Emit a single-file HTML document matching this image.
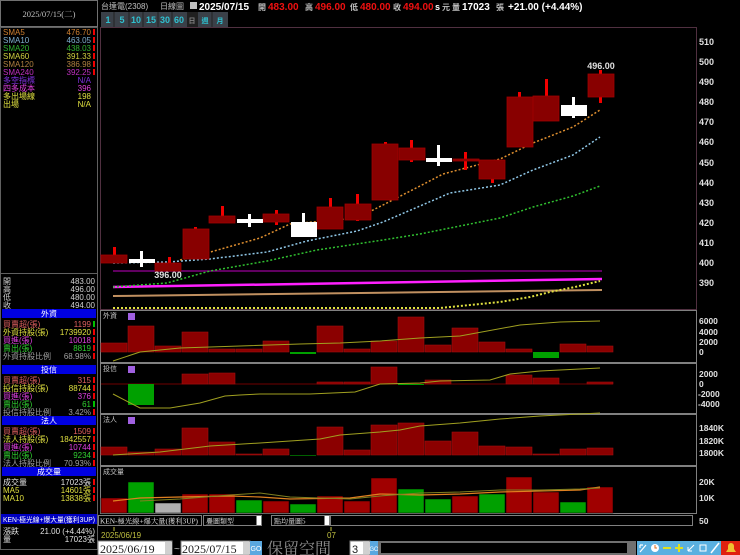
<!DOCTYPE html>
<html><head><meta charset="utf-8"><style>
html,body{margin:0;padding:0;background:#000;width:740px;height:555px;overflow:hidden}
svg{display:block}
text{font-family:"Liberation Sans","Noto Sans CJK TC",sans-serif}
.s{font-family:"Liberation Serif","Noto Serif CJK SC",serif;font-size:8px}
.ax{font-size:9px;font-weight:bold;fill:#e0e0e0}
</style></head><body>
<svg width="740" height="555" viewBox="0 0 740 555" xmlns="http://www.w3.org/2000/svg">
<rect width="740" height="555" fill="#000"/>
<!-- left panel -->
<rect x="0.5" y="0.5" width="97" height="26" fill="#000" stroke="#707070"/>
<text class="s" x="49" y="17" fill="#c0c0c0" text-anchor="middle" style="font-size:8.5px">2025/07/15(二)</text>
<rect x="0.5" y="27.5" width="97" height="522" fill="none" stroke="#606060"/>
<g class="s">
<text x="3" y="35" fill="#d08030">SMA5</text><text x="91" y="35" fill="#d08030" text-anchor="end">476.70</text>
<text x="3" y="43" fill="#80b0d0">SMA10</text><text x="91" y="43" fill="#80b0d0" text-anchor="end">463.05</text>
<text x="3" y="51" fill="#30b030">SMA20</text><text x="91" y="51" fill="#30b030" text-anchor="end">438.03</text>
<text x="3" y="59" fill="#d0d040">SMA60</text><text x="91" y="59" fill="#d0d040" text-anchor="end">391.33</text>
<text x="3" y="67" fill="#b08040">SMA120</text><text x="91" y="67" fill="#b08040" text-anchor="end">386.98</text>
<text x="3" y="75" fill="#c030c0">SMA240</text><text x="91" y="75" fill="#c030c0" text-anchor="end">392.25</text>
<text x="3" y="83" fill="#8030e0">多空指標</text><text x="91" y="83" fill="#8030e0" text-anchor="end">N/A</text>
<text x="3" y="91" fill="#e040e0">四多成本</text><text x="91" y="91" fill="#e040e0" text-anchor="end">396</text>
<text x="3" y="99" fill="#e0e040">多出場線</text><text x="91" y="99" fill="#e0e040" text-anchor="end">198</text>
<text x="3" y="107" fill="#e0e040">出場</text><text x="91" y="107" fill="#e0e040" text-anchor="end">N/A</text>
</g>
<g fill="#f00000"><rect x="93" y="29" width="2" height="6"/><rect x="93" y="37" width="2" height="6"/><rect x="93" y="45" width="2" height="6"/><rect x="93" y="53" width="2" height="6"/><rect x="93" y="61" width="2" height="6"/><rect x="93" y="69" width="2" height="6"/></g>
<line x1="0" y1="273.5" x2="98" y2="273.5" stroke="#606060"/>
<g class="s" fill="#d0d0d0">
<text x="3" y="284">開</text><text x="95" y="284" text-anchor="end">483.00</text>
<text x="3" y="292">高</text><text x="95" y="292" text-anchor="end">496.00</text>
<text x="3" y="300">低</text><text x="95" y="300" text-anchor="end">480.00</text>
<text x="3" y="308">收</text><text x="95" y="308" text-anchor="end">494.00</text>
</g>
<g class="s">
<rect x="2" y="309" width="94" height="9" fill="#0000e0"/><text x="49" y="316.5" fill="#fff" text-anchor="middle">外資</text>
<text x="3" y="327" fill="#e06060">買賣超(張)</text><text x="91" y="327" fill="#e06060" text-anchor="end">1199</text>
<text x="3" y="335" fill="#e0e040">外資持股(張)</text><text x="91" y="335" fill="#e0e040" text-anchor="end">1739920</text>
<text x="3" y="343" fill="#e040e0">買進(張)</text><text x="91" y="343" fill="#e040e0" text-anchor="end">10018</text>
<text x="3" y="351" fill="#30d030">賣出(張)</text><text x="91" y="351" fill="#30d030" text-anchor="end">8819</text>
<text x="3" y="359" fill="#a0a0a0">外資持股比例</text><text x="91" y="359" fill="#a0a0a0" text-anchor="end">68.98%</text>
<rect x="2" y="365" width="94" height="9" fill="#0000e0"/><text x="49" y="372.5" fill="#fff" text-anchor="middle">投信</text>
<text x="3" y="383" fill="#e06060">買賣超(張)</text><text x="91" y="383" fill="#e06060" text-anchor="end">315</text>
<text x="3" y="391" fill="#e0e040">投信持股(張)</text><text x="91" y="391" fill="#e0e040" text-anchor="end">88744</text>
<text x="3" y="399" fill="#e040e0">買進(張)</text><text x="91" y="399" fill="#e040e0" text-anchor="end">376</text>
<text x="3" y="407" fill="#30d030">賣出(張)</text><text x="91" y="407" fill="#30d030" text-anchor="end">61</text>
<text x="3" y="415" fill="#a0a0a0">投信持股比例</text><text x="91" y="415" fill="#a0a0a0" text-anchor="end">3.42%</text>
<rect x="2" y="416" width="94" height="9" fill="#0000e0"/><text x="49" y="423.5" fill="#fff" text-anchor="middle">法人</text>
<text x="3" y="434" fill="#e06060">買賣超(張)</text><text x="91" y="434" fill="#e06060" text-anchor="end">1509</text>
<text x="3" y="442" fill="#e0e040">法人持股(張)</text><text x="91" y="442" fill="#e0e040" text-anchor="end">1842557</text>
<text x="3" y="450" fill="#e040e0">買進(張)</text><text x="91" y="450" fill="#e040e0" text-anchor="end">10744</text>
<text x="3" y="458" fill="#30d030">賣出(張)</text><text x="91" y="458" fill="#30d030" text-anchor="end">9234</text>
<text x="3" y="466" fill="#a0a0a0">法人持股比例</text><text x="91" y="466" fill="#a0a0a0" text-anchor="end">70.93%</text>
<rect x="2" y="467" width="94" height="9" fill="#0000e0"/><text x="49" y="474.5" fill="#fff" text-anchor="middle">成交量</text>
<text x="3" y="485" fill="#e0e0e0">成交量</text><text x="91" y="485" fill="#e0e0e0" text-anchor="end">17023張</text>
<text x="3" y="493" fill="#e0e040">MA5</text><text x="91" y="493" fill="#e0e040" text-anchor="end">14601張</text>
<text x="3" y="501" fill="#e0e040">MA10</text><text x="91" y="501" fill="#e0e040" text-anchor="end">13838張</text>
<rect x="1" y="514" width="96" height="10" fill="#0000c0"/><text x="3" y="522" fill="#fff" style="font-size:7px" textLength="92" lengthAdjust="spacingAndGlyphs">KEN-極光線+爆大量(獲利3UP)</text>
<text x="3" y="534" fill="#e0e0e0">漲跌</text><text x="95" y="534" fill="#e0e0e0" text-anchor="end">21.00 (+4.44%)</text>
<text x="3" y="542" fill="#e0e0e0">量</text><text x="95" y="542" fill="#e0e0e0" text-anchor="end">17023張</text>
</g>
<g fill="#f00000"><rect x="93" y="321" width="2" height="6" fill="#00c000"/><rect x="93" y="329" width="2" height="6"/><rect x="93" y="337" width="2" height="6"/><rect x="93" y="345" width="2" height="6"/><rect x="93" y="353" width="2" height="6"/>
<rect x="93" y="377" width="2" height="6"/><rect x="93" y="385" width="2" height="6"/><rect x="93" y="393" width="2" height="6"/><rect x="93" y="401" width="2" height="6" fill="#00c000"/><rect x="93" y="409" width="2" height="6"/>
<rect x="93" y="428" width="2" height="6"/><rect x="93" y="436" width="2" height="6"/><rect x="93" y="444" width="2" height="6"/><rect x="93" y="452" width="2" height="6"/><rect x="93" y="460" width="2" height="6"/>
<rect x="93" y="479" width="2" height="6"/><rect x="93" y="487" width="2" height="6"/><rect x="93" y="495" width="2" height="6"/></g>

<!-- top header -->
<g fill="#c0c0c0" class="s"><text x="101" y="9">台達電(2308)</text><text x="160" y="9">日線圖</text></g>
<rect x="190" y="2" width="7" height="7" fill="#c0c0c0"/>
<g font-size="10" font-weight="bold">
<text x="199" y="10" fill="#fff">2025/07/15</text>
<text x="258" y="10" fill="#c0c0c0" font-size="8">開</text><text x="268" y="10" fill="#f01010">483.00</text>
<text x="305" y="10" fill="#c0c0c0" font-size="8">高</text><text x="315" y="10" fill="#f01010">496.00</text>
<text x="350" y="10" fill="#c0c0c0" font-size="8">低</text><text x="360" y="10" fill="#f01010">480.00</text>
<text x="393" y="10" fill="#c0c0c0" font-size="8">收</text><text x="403" y="10" fill="#f01010">494.00</text>
<text x="435" y="10" fill="#fff" font-size="9">s</text><text x="442" y="10" fill="#c0c0c0" font-size="8">元</text>
<text x="452" y="10" fill="#c0c0c0" font-size="8">量</text><text x="462" y="10" fill="#fff">17023</text>
<text x="496" y="10" fill="#c0c0c0" font-size="8">張</text>
<text x="508" y="10" fill="#fff">+21.00 (+4.44%)</text>
</g>
<g font-size="9" font-weight="bold" fill="#30c0d0" text-anchor="middle">
<rect x="101" y="12" width="86" height="15" fill="#3a4048"/>
<rect x="187" y="12" width="11" height="15" fill="#202020"/>
<rect x="198" y="12" width="30" height="15" fill="#3a4048"/>
<text x="108" y="23">1</text><text x="122" y="23">5</text><text x="136" y="23">10</text><text x="151" y="23">15</text><text x="165" y="23">30</text><text x="179" y="23">60</text>
<text x="192" y="23" fill="#808080" font-size="7">日</text><text x="205" y="23" font-size="7">週</text><text x="220" y="23" font-size="7">月</text>
<g stroke="#222"><line x1="114" y1="12" x2="114" y2="27"/><line x1="129" y1="12" x2="129" y2="27"/><line x1="143" y1="12" x2="143" y2="27"/><line x1="158" y1="12" x2="158" y2="27"/><line x1="172" y1="12" x2="172" y2="27"/><line x1="212" y1="12" x2="212" y2="27"/></g>
</g>

<rect x="100.5" y="27.5" width="596" height="282" fill="none" stroke="#503040"/>
<g class="ax">
<text x="699" y="45">510</text><text x="699" y="65">500</text><text x="699" y="85">490</text><text x="699" y="105">480</text><text x="699" y="125">470</text><text x="699" y="145">460</text><text x="699" y="166">450</text><text x="699" y="186">440</text><text x="699" y="206">430</text><text x="699" y="226">420</text><text x="699" y="246">410</text><text x="699" y="266">400</text><text x="699" y="286">390</text>
</g>
<line x1="113" y1="271" x2="602" y2="271" stroke="#800080" stroke-width="1.5"/>
<line x1="113" y1="287" x2="602" y2="279" stroke="#ff20ff" stroke-width="2.5"/>
<line x1="113" y1="296" x2="602" y2="290" stroke="#c09060" stroke-width="2"/>
<polyline points="113,308 440,308 470,305 500,302 530,297 550,292 575,287 600,281" fill="none" stroke="#e0e040" stroke-width="2" stroke-dasharray="2,2"/>
<polyline points="113,287 167,283 210,271 267,261 317,250 383,240 420,234 450,228 500,218 533,207 573,196 600,186" fill="none" stroke="#30c030" stroke-width="1.5" stroke-dasharray="2,2"/>
<polyline points="113,263 167,262 210,259 267,252 307,241 357,231 383,222 420,206 450,193 500,185 533,170 573,155 600,137" fill="none" stroke="#90c8e8" stroke-width="1.5" stroke-dasharray="2,2"/>
<polyline points="180,260 207,253 260,238 290,224 357,218 383,205 420,186 443,174 500,159 533,143 573,127 600,110" fill="none" stroke="#e09030" stroke-width="1.5" stroke-dasharray="2,2"/>
<g fill="#f00000">
<rect x="113" y="247" width="3" height="10"/><rect x="168" y="257" width="3" height="8"/><rect x="194" y="227" width="3" height="4"/><rect x="221" y="206" width="3" height="12"/><rect x="275" y="210" width="3" height="15"/><rect x="329" y="198" width="3" height="11"/><rect x="356" y="194" width="3" height="27"/><rect x="384" y="142" width="3" height="4"/><rect x="410" y="140" width="3" height="22"/><rect x="464" y="152" width="3" height="18"/><rect x="491" y="175" width="3" height="8"/><rect x="518" y="92" width="3" height="7"/><rect x="545" y="79" width="3" height="19"/><rect x="599" y="70" width="3" height="33"/>
</g>
<g fill="#880000" stroke="#a00000" stroke-width="0.8">
<rect x="101" y="255" width="26" height="8"/><rect x="155" y="263" width="26" height="8"/><rect x="183" y="229" width="26" height="30"/><rect x="209" y="216" width="26" height="7"/><rect x="263" y="214" width="26" height="8"/><rect x="317" y="207" width="26" height="22"/><rect x="345" y="204" width="26" height="16"/><rect x="372" y="144" width="26" height="56"/><rect x="399" y="148" width="26" height="12"/><rect x="453" y="159" width="26" height="2"/><rect x="479" y="160" width="26" height="19"/><rect x="507" y="97" width="26" height="50"/><rect x="533" y="96" width="26" height="25"/><rect x="588" y="74" width="26" height="23"/>
</g>
<g fill="#ffffff">
<rect x="129" y="259" width="26" height="4"/><rect x="140" y="251" width="3" height="16"/>
<rect x="237" y="219" width="26" height="4"/><rect x="248" y="214" width="3" height="13"/>
<rect x="291" y="222" width="26" height="15"/><rect x="302" y="213" width="3" height="9"/>
<rect x="426" y="158" width="26" height="4"/><rect x="437" y="145" width="3" height="21"/>
<rect x="561" y="105" width="26" height="11"/><rect x="572" y="97" width="3" height="21"/>
</g>
<text x="168" y="278" fill="#e0e0e0" font-size="9" font-weight="bold" text-anchor="middle">396.00</text>
<text x="601" y="69" fill="#e0e0e0" font-size="9" font-weight="bold" text-anchor="middle">496.00</text>

<g fill="none" stroke="#808080"><rect x="100.5" y="310.5" width="596" height="52"/><rect x="100.5" y="363.5" width="596" height="50"/><rect x="100.5" y="414.5" width="596" height="51"/><rect x="100.5" y="466.5" width="596" height="47"/></g>
<g class="s" fill="#c0c0c0" style="font-size:7px"><text x="103" y="318">外資</text><text x="103" y="371">投信</text><text x="103" y="422">法人</text><text x="103" y="474">成交量</text></g>
<g fill="#a060e0"><rect x="128" y="313" width="7" height="7"/><rect x="128" y="366" width="7" height="7"/><rect x="128" y="417" width="7" height="7"/></g>
<g class="ax" style="font-size:8.5px">
<text x="699" y="324">6000</text><text x="699" y="335">4000</text><text x="699" y="345">2000</text><text x="699" y="355">0</text>
<text x="699" y="377">2000</text><text x="699" y="387">0</text><text x="698" y="397">-2000</text><text x="698" y="407">-4000</text>
<text x="699" y="431">1840K</text><text x="699" y="444">1820K</text><text x="699" y="456">1800K</text>
<text x="699" y="485">20K</text><text x="699" y="501">10K</text>
<text x="699" y="524">50</text>
</g>
<g fill="#8b0000" stroke="#a01010" stroke-width="0.6">
<rect x="101" y="343" width="26" height="9"/><rect x="128" y="326" width="26" height="26"/><rect x="155" y="346" width="26" height="6"/><rect x="182" y="332" width="26" height="20"/><rect x="209" y="349" width="26" height="3"/><rect x="236" y="349" width="26" height="3"/><rect x="263" y="341" width="26" height="11"/><rect x="317" y="326" width="26" height="26"/><rect x="344" y="349" width="26" height="3"/><rect x="371" y="341" width="26" height="11"/><rect x="398" y="317" width="26" height="35"/><rect x="425" y="345" width="26" height="7"/><rect x="452" y="328" width="26" height="24"/><rect x="479" y="342" width="26" height="10"/><rect x="506" y="349" width="26" height="3"/><rect x="560" y="344" width="26" height="8"/><rect x="587" y="346" width="26" height="6"/>
</g>
<g fill="#00a000"><rect x="290" y="352" width="26" height="2"/><rect x="533" y="352" width="26" height="6"/></g>
<polyline points="113,361 140,352 180,348 240,346 300,344 340,343 380,341 420,338 460,336 520,325 560,322 600,321" fill="none" stroke="#a0a020" stroke-width="1"/>
<line x1="101" y1="384" x2="613" y2="384" stroke="#700000" stroke-width="1"/>
<g fill="#8b0000" stroke="#a01010" stroke-width="0.6">
<rect x="182" y="374" width="26" height="10"/><rect x="209" y="373" width="26" height="11"/><rect x="317" y="382" width="26" height="2"/><rect x="344" y="382" width="26" height="2"/><rect x="371" y="367" width="26" height="17"/><rect x="425" y="380" width="26" height="4"/><rect x="506" y="375" width="26" height="9"/><rect x="533" y="378" width="26" height="6"/><rect x="587" y="382" width="26" height="2"/>
</g>
<g fill="#00a000"><rect x="128" y="384" width="26" height="21"/><rect x="398" y="384" width="26" height="1"/></g>
<polyline points="113,394 140,408 170,408 200,403 225,396 240,395 260,394 310,394 355,392 380,384 420,383 440,381 490,380 510,374 540,371 600,368" fill="none" stroke="#a0a020" stroke-width="1"/>
<g fill="#8b0000" stroke="#a01010" stroke-width="0.6">
<rect x="101" y="447" width="26" height="8"/><rect x="128" y="452" width="26" height="3"/><rect x="155" y="449" width="26" height="6"/><rect x="182" y="428" width="26" height="27"/><rect x="209" y="442" width="26" height="13"/><rect x="236" y="454" width="26" height="1"/><rect x="263" y="449" width="26" height="6"/><rect x="317" y="427" width="26" height="28"/><rect x="344" y="450" width="26" height="5"/><rect x="371" y="425" width="26" height="30"/><rect x="398" y="423" width="26" height="32"/><rect x="425" y="441" width="26" height="14"/><rect x="452" y="432" width="26" height="23"/><rect x="479" y="446" width="26" height="9"/><rect x="506" y="447" width="26" height="8"/><rect x="533" y="454" width="26" height="1"/><rect x="560" y="449" width="26" height="6"/><rect x="587" y="448" width="26" height="7"/>
</g>
<rect x="290" y="455" width="26" height="1" fill="#006000"/>
<polyline points="113,455 160,452 210,446 260,443 320,439 340,435 380,432 400,430 420,426 460,423 500,419 540,416 600,413" fill="none" stroke="#a0a020" stroke-width="1"/>
<g stroke="#000" stroke-width="0.5">
<rect x="101" y="498" width="26" height="15" fill="#a00000"/><rect x="128" y="482" width="26" height="31" fill="#00a000"/><rect x="155" y="503" width="26" height="10" fill="#b0b0b0"/><rect x="182" y="494" width="26" height="19" fill="#a00000"/><rect x="209" y="494" width="26" height="19" fill="#a00000"/><rect x="236" y="500" width="26" height="13" fill="#00a000"/><rect x="263" y="501" width="26" height="12" fill="#a00000"/><rect x="290" y="504" width="26" height="9" fill="#00a000"/><rect x="317" y="496" width="26" height="17" fill="#a00000"/><rect x="344" y="501" width="26" height="12" fill="#a00000"/><rect x="371" y="478" width="26" height="35" fill="#a00000"/><rect x="398" y="489" width="26" height="24" fill="#00a000"/><rect x="425" y="499" width="26" height="14" fill="#00a000"/><rect x="452" y="496" width="26" height="17" fill="#a00000"/><rect x="479" y="494" width="26" height="19" fill="#00a000"/><rect x="506" y="477" width="26" height="36" fill="#a00000"/><rect x="533" y="492" width="26" height="21" fill="#a00000"/><rect x="560" y="502" width="26" height="11" fill="#00a000"/><rect x="587" y="487" width="26" height="26" fill="#a00000"/>
</g>
<polyline points="113,501 140,498 180,497 230,496 260,497 290,499 350,498 380,494 420,495 460,494 500,492 540,491 580,490 600,487" fill="none" stroke="#e08020" stroke-width="1.2"/>
<polyline points="140,501 180,499 230,495 260,493 290,497 350,499 380,496 420,493 460,492 500,490 540,490 580,489 600,488" fill="none" stroke="#808020" stroke-width="1"/>

<rect x="98.5" y="515.5" width="103" height="10" fill="#000" stroke="#808080"/>
<text x="100" y="523.5" class="s" style="font-size:7px" fill="#e0e0e0" textLength="98" lengthAdjust="spacingAndGlyphs">KEN-極光線+爆大量(獲利3UP)</text>
<rect x="203.5" y="515.5" width="58" height="10" fill="#000" stroke="#808080"/><rect x="256.5" y="515.5" width="5" height="10" fill="#fff" stroke="#808080"/>
<text x="206" y="523.5" class="s" style="font-size:7px" fill="#e0e0e0">疊圖類型</text>
<rect x="271.5" y="515.5" width="58" height="10" fill="#000" stroke="#808080"/><rect x="324.5" y="515.5" width="5" height="10" fill="#fff" stroke="#808080"/>
<text x="274" y="523.5" class="s" style="font-size:7px" fill="#e0e0e0">點均量圖5</text>
<rect x="330.5" y="515.5" width="362" height="10" fill="#000" stroke="#808080"/>
<line x1="114" y1="527" x2="114" y2="531" stroke="#c0c040"/><line x1="331" y1="527" x2="331" y2="531" stroke="#c0c040"/>
<text x="101" y="538" font-size="8" fill="#c0c040">2025/06/19</text>
<text x="327" y="538" font-size="8" fill="#c0c040">07</text>
<rect x="98" y="541" width="74" height="14" fill="#fff" stroke="#808080"/><rect x="165" y="542" width="7" height="12" fill="#d0d0d0"/>
<text x="100" y="553" fill="#202020" class="s" style="font-size:12px">2025/06/19</text>
<text x="174" y="552" font-size="10" fill="#c0c0c0">~</text>
<rect x="181" y="541" width="69" height="14" fill="#fff" stroke="#808080"/><rect x="243" y="542" width="7" height="12" fill="#d0d0d0"/>
<text x="182" y="553" fill="#202020" class="s" style="font-size:12px">2025/07/15</text>
<rect x="250" y="541" width="12" height="14" fill="#5aa8e0"/><text x="256" y="551" font-size="7" fill="#fff" text-anchor="middle">GO</text>
<text x="267" y="554" fill="#909090" class="s" style="font-size:16px">保留空間</text>
<rect x="350" y="541" width="20" height="14" fill="#fff" stroke="#808080"/><text x="352" y="553" font-size="11" fill="#202020">3</text>
<rect x="363" y="542" width="7" height="12" fill="#d0d0d0"/>
<rect x="370" y="541" width="8" height="14" fill="#5aa8e0"/><text x="374" y="551" font-size="6" fill="#fff" text-anchor="middle">GO</text>
<rect x="378" y="541" width="258" height="14" fill="#707070"/><rect x="381" y="543" width="246" height="10" fill="#000"/>
<g>
<rect x="637" y="541" width="12" height="14" fill="#5ab0e0"/><path d="M640 552 L646 545 M640 545 L640 548 M640 545 L643 545" stroke="#fff" stroke-width="1.2" fill="none"/>
<rect x="649" y="541" width="12" height="14" fill="#5ab0e0"/><circle cx="655" cy="548" r="4" fill="#fff"/><path d="M655 545 V548 H657" stroke="#e07020" fill="none"/>
<rect x="661" y="541" width="12" height="14" fill="#5ab0e0"/><rect x="663" y="547" width="8" height="2" fill="#e0e020"/>
<rect x="673" y="541" width="12" height="14" fill="#5ab0e0"/><path d="M675 548 H683 M679 544 V552" stroke="#e0e020" stroke-width="2"/>
<rect x="685" y="541" width="12" height="14" fill="#5ab0e0"/><path d="M688 551 L694 545 M688 551 V547 M688 551 H692" stroke="#fff" fill="none"/>
<rect x="697" y="541" width="12" height="14" fill="#5ab0e0"/><rect x="700" y="545" width="6" height="6" stroke="#fff" fill="none"/>
<rect x="709" y="541" width="12" height="14" fill="#5ab0e0"/><path d="M711 553 L719 543" stroke="#fff" stroke-width="1.5"/>
<rect x="721" y="541" width="19" height="14" fill="#e02010"/><path d="M726 552 H736 L734 549 V546 A3 3 0 0 0 728 546 V549 Z" fill="#f0c030"/>
</g>
</svg>
</body></html>
